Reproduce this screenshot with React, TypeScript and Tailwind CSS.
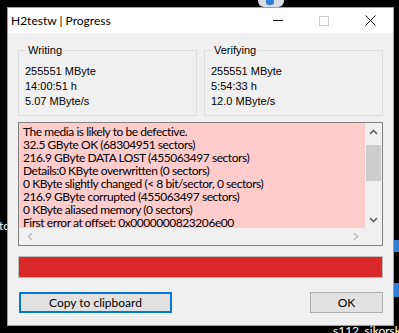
const lines = [
  'The media is likely to be defective.',
  '32.5 GByte OK (68304951 sectors)',
  '216.9 GByte DATA LOST (455063497 sectors)',
  'Details:0 KByte overwritten (0 sectors)',
  '0 KByte slightly changed (< 8 bit/sector, 0 sectors)',
  '216.9 GByte corrupted (455063497 sectors)',
  '0 KByte aliased memory (0 sectors)',
  'First error at offset: 0x0000000823206e00',
]

const GroupBox: React.FC<{ title: string; rows: string[] }> = ({ title, rows }) => (
  <fieldset className="border border-[#dcdcdc] h-[73px] px-[6px] font-['Liberation_Sans',sans-serif] text-[11px] text-black">
    <legend className="ml-[1px] px-[2px] leading-[14px]">{title}</legend>
    <div className="pt-[7px] flex flex-col">
      {rows.map((r) => (
        <div key={r} className="leading-[15px]">{r}</div>
      ))}
    </div>
  </fieldset>
)

export default function App() {
  return (
    <div className="relative w-[399px] h-[333px] bg-black overflow-hidden pl-[7px] pt-[7px]">
      {/* desktop bits around the window */}
      <div className="absolute left-[258px] top-0 w-[26px] h-[7px] bg-[#d8dde3] rounded-b-[6px]" />
      <div className="absolute left-[266px] top-0 w-[8px] h-[5px] bg-[#2f7fd4] rounded-b-[3px]" />
      <div className="absolute left-[-1px] top-[219px] text-white text-[12px] leading-[14px] font-['Lato',sans-serif]">to</div>
      <div className="absolute left-[394px] top-[240px] w-[5px] h-[12px] bg-[#2f7fd4]" />
      <div className="absolute left-[394px] top-[283px] w-[5px] h-[14px] bg-[#2f7fd4]" />
      <div className="absolute left-[333px] top-[324px] text-white text-[12px] leading-[14px] font-['Lato',sans-serif] whitespace-nowrap">s112_sikorski</div>

      <div className="relative w-[387px] h-[319px] border border-[#a0a0a0] flex flex-col bg-[#f0f0f0]">
        {/* title bar */}
        <div className="h-[25px] bg-white flex items-center shrink-0">
          <span className="pl-[3px] flex-1 text-[12px] text-black font-['Lato',sans-serif]">H2testw | Progress</span>
          <div className="w-[46px] h-full flex items-center justify-center">
            <div className="w-[10px] h-px bg-black" />
          </div>
          <div className="w-[46px] h-full flex items-center justify-center">
            <div className="w-[10px] h-[10px] border border-[#cccccc]" />
          </div>
          <div className="w-[46px] h-full flex items-center justify-center">
            <svg width="11" height="11" viewBox="0 0 11 11">
              <path d="M0.5 0.5 L10.5 10.5 M10.5 0.5 L0.5 10.5" stroke="#000" strokeWidth="1" />
            </svg>
          </div>
        </div>

        {/* body */}
        <div className="flex-1 flex flex-col px-[10px] pt-[10px]">
          <div className="grid grid-cols-2 gap-[7px]">
            <GroupBox title="Writing" rows={['255551 MByte', '14:00:51 h', '5.07 MByte/s']} />
            <GroupBox title="Verifying" rows={['255551 MByte', '5:54:33 h', '12.0 MByte/s']} />
          </div>

          {/* log list */}
          <div className="mt-[6px] h-[124px] border border-[#828282] flex flex-col">
            <div className="flex flex-1 min-h-0">
              <div className="flex-1 bg-[#ffcccc] pl-[4px] pt-[2px] overflow-hidden whitespace-nowrap font-['Lato',sans-serif] text-[12px] tracking-[-0.45px] text-black">
                {lines.map((l) => (
                  <div key={l} className="leading-[13px]">{l}</div>
                ))}
              </div>
              <div className="w-[17px] bg-[#f0f0f0] flex flex-col">
                <div className="h-[17px] flex items-center justify-center">
                  <svg width="9" height="6" viewBox="0 0 9 6">
                    <path d="M1 5 L4.5 1.5 L8 5" stroke="#606060" strokeWidth="1.6" fill="none" />
                  </svg>
                </div>
                <div className="h-[5px]" />
                <div className="h-[36px] bg-[#cdcdcd] mx-px" />
                <div className="flex-1" />
                <div className="h-[17px] flex items-center justify-center">
                  <svg width="9" height="6" viewBox="0 0 9 6">
                    <path d="M1 1 L4.5 4.5 L8 1" stroke="#606060" strokeWidth="1.6" fill="none" />
                  </svg>
                </div>
              </div>
            </div>
            <div className="h-[17px] flex bg-[#f0f0f0]">
              <div className="flex-1 flex items-center justify-between pl-[8px] pr-[6px]">
                <svg width="6" height="9" viewBox="0 0 6 9">
                  <path d="M5 1 L1.5 4.5 L5 8" stroke="#c0c0c0" strokeWidth="1.6" fill="none" />
                </svg>
                <svg width="6" height="9" viewBox="0 0 6 9">
                  <path d="M1 1 L4.5 4.5 L1 8" stroke="#c0c0c0" strokeWidth="1.6" fill="none" />
                </svg>
              </div>
              <div className="w-[17px]" />
            </div>
          </div>

          {/* progress bar */}
          <div className="mt-[10px] h-[22px] border border-[#bcbcbc] bg-[#da2828]" />

          {/* buttons */}
          <div className="mt-[14px] flex justify-between font-['Lato',sans-serif] text-[12px] text-black">
            <button className="ml-px w-[153px] h-[21px] border-2 border-[#0078d7] bg-[#e1e1e1] flex items-center justify-center">
              Copy to clipboard
            </button>
            <button className="w-[73px] h-[21px] border border-[#adadad] bg-[#e1e1e1] flex items-center justify-center">
              OK
            </button>
          </div>
        </div>
      </div>
    </div>
  )
}
